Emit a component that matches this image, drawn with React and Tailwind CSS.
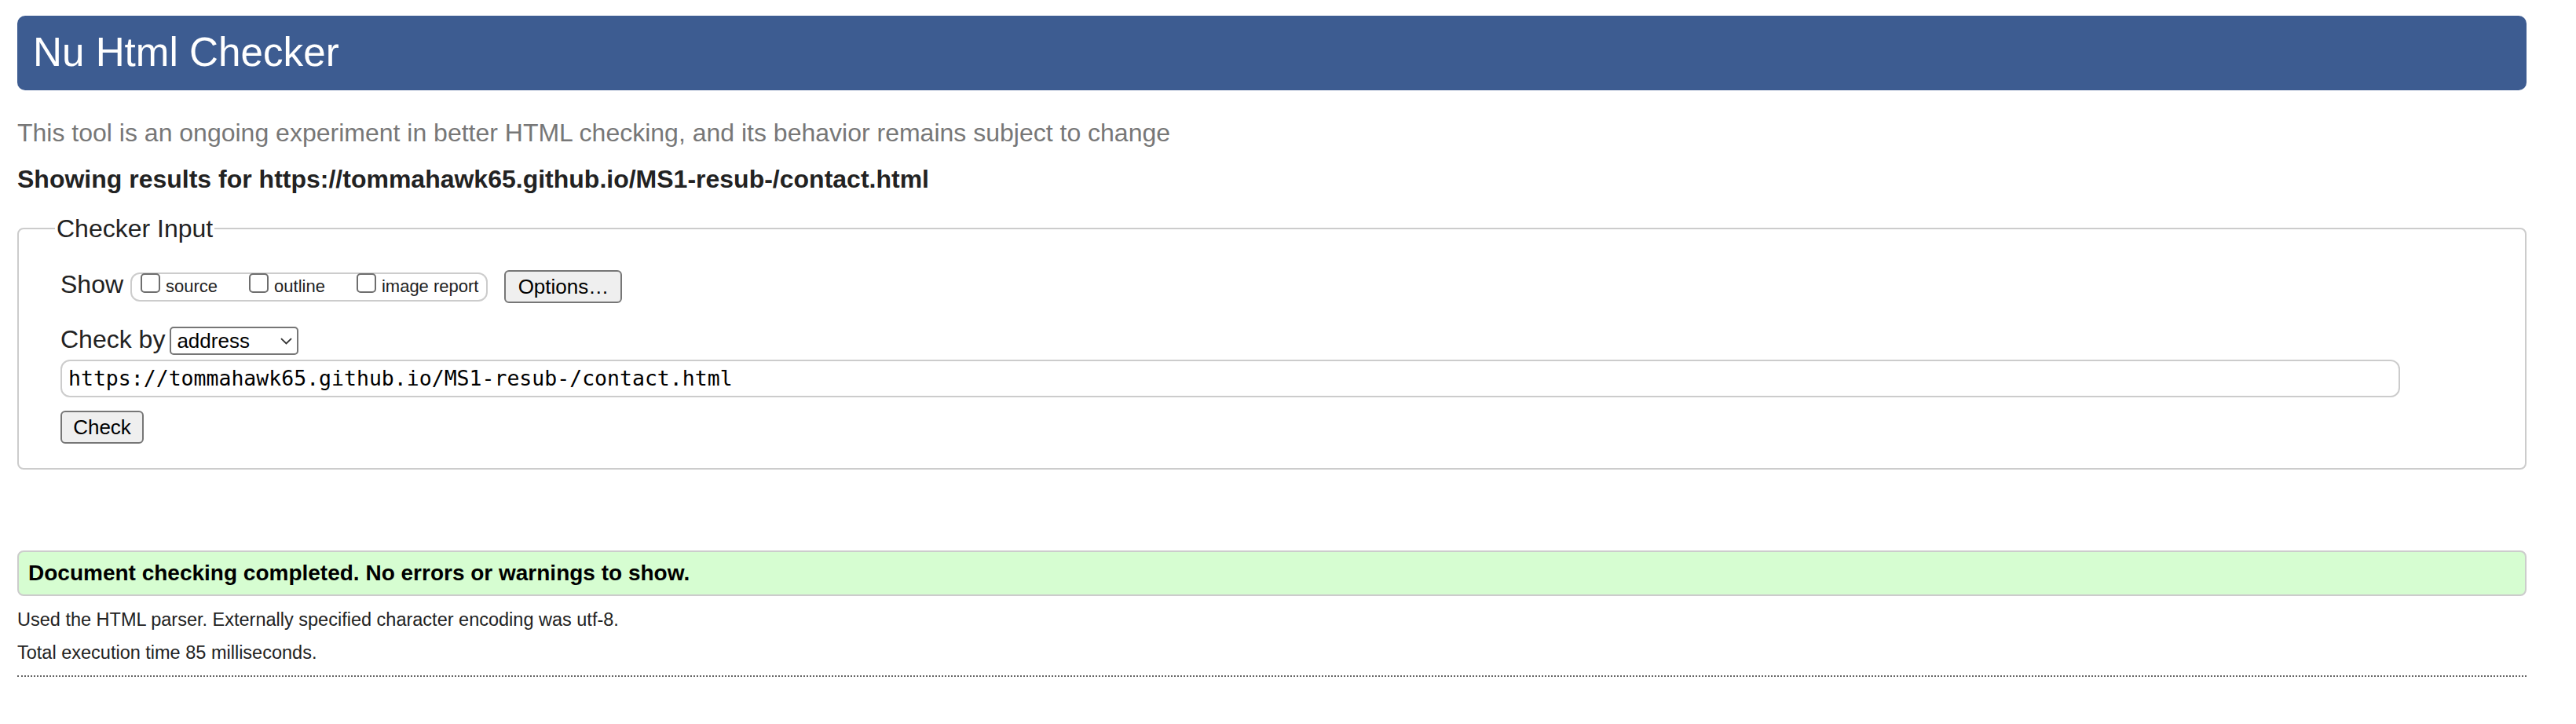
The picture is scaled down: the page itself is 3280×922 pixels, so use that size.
import React from "react";

const options = [
  { label: "source", gap: "mr-[40px]" },
  { label: "outline", gap: "mr-[40px]" },
  { label: "image report", gap: "" },
];

function Checkbox() {
  return (
    <span className="block w-[25px] h-[25px] -mt-[1px] rounded-[5px] border-2 border-[#6e6e6e] bg-white shrink-0" />
  );
}

export default function App() {
  return (
    <div className="min-h-screen bg-white font-['Liberation_Sans',Arial,sans-serif] text-[#222]">
      <div className="ml-[22px] w-[3195px] pt-[20px]">
        {/* header */}
        <h1 className="h-[95px] rounded-[10px] bg-[#3d5c91] flex items-center pl-[20px] text-white text-[51.2px] font-normal">
          Nu Html Checker
        </h1>

        <p className="mt-[36px] text-[32px] leading-[36px] text-[#777]">
          This tool is an ongoing experiment in better HTML checking, and its behavior remains subject to change
        </p>
        <p className="mt-[23px] text-[32px] leading-[36px] font-bold text-[#222]">
          Showing results for https://tommahawk65.github.io/MS1-resub-/contact.html
        </p>

        {/* checker input */}
        <fieldset className="mt-[27px] border-2 border-[#cccccc] rounded-[8px] pl-[53px] pr-[159px] pt-[35px] pb-[31px]">
          <legend className="-ml-[7px] px-[2px] text-[32px] leading-[36px] text-[#222]">
            Checker Input
          </legend>

          <div className="flex items-center h-[42px]">
            <span className="text-[32px] leading-[32px] mb-[6px]">Show</span>
            <div className="ml-[9px] h-[37px] border-2 border-[#cccccc] rounded-[12px] flex items-start pl-[11px] pr-[10px]">
              {options.map((o) => (
                <label key={o.label} className={"flex items-start " + o.gap}>
                  <Checkbox />
                  <span className="ml-[7px] text-[22px] leading-[32px] whitespace-nowrap">
                    {o.label}
                  </span>
                </label>
              ))}
            </div>
            <button className="ml-[21px] w-[150px] h-[42px] rounded-[6px] border-2 border-[#767676] bg-[#efefef] text-[26px] text-black flex items-center justify-center">
              Options…
            </button>
          </div>

          <div className="mt-[30px] flex items-center h-[36px]">
            <span className="text-[32px] leading-[32px] mb-[4px]">Check by</span>
            <div className="ml-[6px] w-[164px] h-[36px] rounded-[5px] border-2 border-[#767676] bg-white flex items-center justify-between pl-[7px] pr-[6px] text-[26px] text-black">
              <span>address</span>
              <svg width="15" height="9" viewBox="0 0 15 9" fill="none">
                <path d="M1 1.2 L7.5 7.5 L14 1.2" stroke="#333" strokeWidth="1.8" />
              </svg>
            </div>
          </div>

          <div className="mt-[6px] h-[48px] w-full rounded-[12px] border-2 border-[#cccccc] bg-white flex items-center pl-[8px] font-['DejaVu_Sans_Mono',monospace] text-[26.5px] text-black">
            https://tommahawk65.github.io/MS1-resub-/contact.html
          </div>

          <button className="mt-[17px] w-[106px] h-[42px] rounded-[6px] border-2 border-[#767676] bg-[#efefef] text-[26px] text-black flex items-center justify-center">
            Check
          </button>
        </fieldset>

        {/* result */}
        <div className="mt-[103px] h-[58px] rounded-[8px] border-2 border-[#cccccc] bg-[#d6fdd1] flex items-center pl-[12px] text-[28px] font-bold text-black">
          Document checking completed. No errors or warnings to show.
        </div>

        <p className="mt-[16px] text-[23.5px] leading-[28px] text-[#222]">
          Used the HTML parser. Externally specified character encoding was utf-8.
        </p>
        <p className="mt-[14px] text-[23.5px] leading-[28px] text-[#222]">
          Total execution time 85 milliseconds.
        </p>
        <div className="mt-[15px] border-t-2 border-dotted border-[#666]" />
      </div>
    </div>
  );
}
